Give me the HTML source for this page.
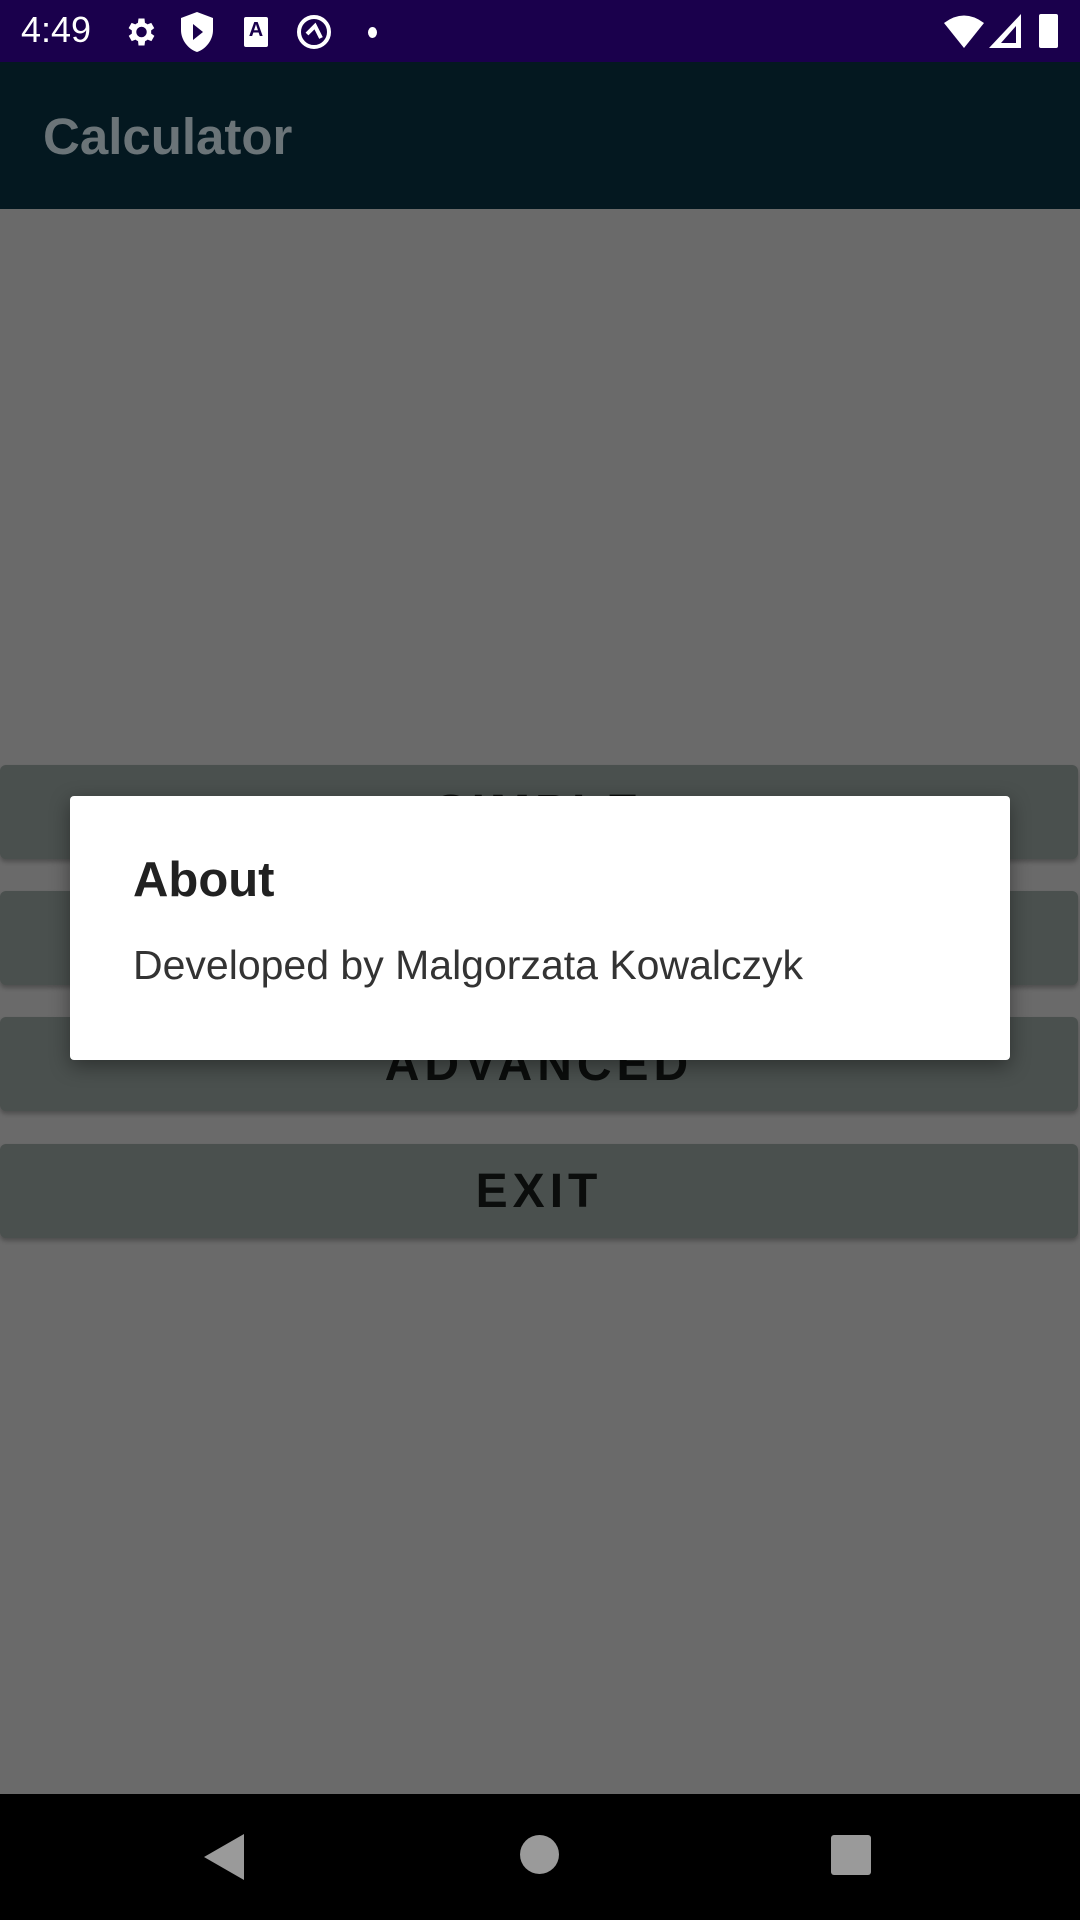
<!DOCTYPE html>
<html><head><style>
body{margin:0;width:1080px;height:1920px;position:relative;overflow:hidden;background:#6a6a6a;font-family:"Liberation Sans",sans-serif}
.sb{position:absolute;left:0;top:0;width:1080px;height:62px;background:#1a004c;color:#fff}
.ab{position:absolute;left:0;top:62px;width:1080px;height:147px;background:#041820}
.ab span{position:absolute;left:43px;top:45px;font-size:51px;font-weight:bold;color:#6b7478}
.btn{position:absolute;left:0;width:1078px;height:94px;background:#4a504e;border-radius:6px;text-align:center;line-height:96px;font-size:48px;font-weight:bold;letter-spacing:5px;color:#0b0d0c;box-shadow:0 3px 4px rgba(0,0,0,.25)}
.dlg{position:absolute;left:70px;top:796px;width:940px;height:264px;background:#fff;border-radius:4px;box-shadow:0 6px 20px rgba(0,0,0,.4)}
.nav{position:absolute;left:0;top:1794px;width:1080px;height:126px;background:#000}
</style></head><body>
<div class="sb">
<span style="position:absolute;left:21px;top:9px;font-size:36px">4:49</span>
<svg style="position:absolute;left:122px;top:14px" width="36" height="36" viewBox="0 0 24 24"><path fill="#fff" d="M19.4 13a7.5 7.5 0 000-2l2.1-1.6-2-3.5-2.5 1a7 7 0 00-1.7-1L15 3h-4l-.4 2.9a7 7 0 00-1.7 1l-2.5-1-2 3.5L6.6 11a7.5 7.5 0 000 2l-2.1 1.6 2 3.5 2.5-1a7 7 0 001.7 1L11 21h4l.4-2.9a7 7 0 001.7-1l2.5 1 2-3.5zM13 15.5a3.5 3.5 0 110-7 3.5 3.5 0 010 7z"/></svg>
<svg style="position:absolute;left:181px;top:12px" width="32" height="40" viewBox="0 0 16 20"><path fill="#fff" d="M8 0L0 3v6c0 5 3.5 9.5 8 11 4.5-1.5 8-6 8-11V3z"/><path fill="#1a004c" d="M6 6l5 4-5 4z"/></svg>
<div style="position:absolute;left:244px;top:17px;width:24px;height:30px;background:#fff;border-radius:2px;color:#1a004c;font-size:20px;font-weight:bold;text-align:center;line-height:26px">A</div>
<svg style="position:absolute;left:295px;top:12px" width="38" height="40" viewBox="0 0 38 40"><circle cx="19" cy="20" r="15" fill="none" stroke="#fff" stroke-width="4"/><path d="M12 22l8-8 6 12" fill="none" stroke="#fff" stroke-width="4"/></svg>
<div style="position:absolute;left:368px;top:27px;width:9px;height:11px;border-radius:50%;background:#fff"></div>
<svg style="position:absolute;left:944px;top:14px" width="40" height="34" viewBox="0 0 40 34"><path fill="#fff" d="M0 9Q20-6 40 9L20 34z"/></svg>
<svg style="position:absolute;left:989px;top:14px" width="32" height="34" viewBox="0 0 32 34"><path fill="#fff" d="M32 0V34H0z"/><path fill="#1a004c" d="M27 12V29H12z"/></svg>
<div style="position:absolute;left:1039px;top:14px;width:19px;height:34px;background:#fff;border-radius:2px"></div>
</div>
<div class="ab"><span>Calculator</span></div>
<div class="btn" style="top:765px">SIMPLE</div>
<div class="btn" style="top:891px">BASIC</div>
<div class="btn" style="top:1017px">ADVANCED</div>
<div class="btn" style="top:1144px">EXIT</div>
<div class="dlg">
<div style="position:absolute;left:63px;top:56px;font-size:49px;font-weight:bold;color:#212121">About</div>
<div style="position:absolute;left:63px;top:146px;font-size:41px;color:#333">Developed by Malgorzata Kowalczyk</div>
</div>
<div class="nav">
<svg style="position:absolute;left:204px;top:40px" width="42" height="46" viewBox="0 0 42 46"><path fill="#9a9a9a" d="M40 0V46L0 23z"/></svg>
<div style="position:absolute;left:520px;top:41px;width:39px;height:39px;border-radius:50%;background:#9a9a9a"></div>
<div style="position:absolute;left:831px;top:41px;width:40px;height:40px;border-radius:3px;background:#9a9a9a"></div>
</div>
</body></html>
